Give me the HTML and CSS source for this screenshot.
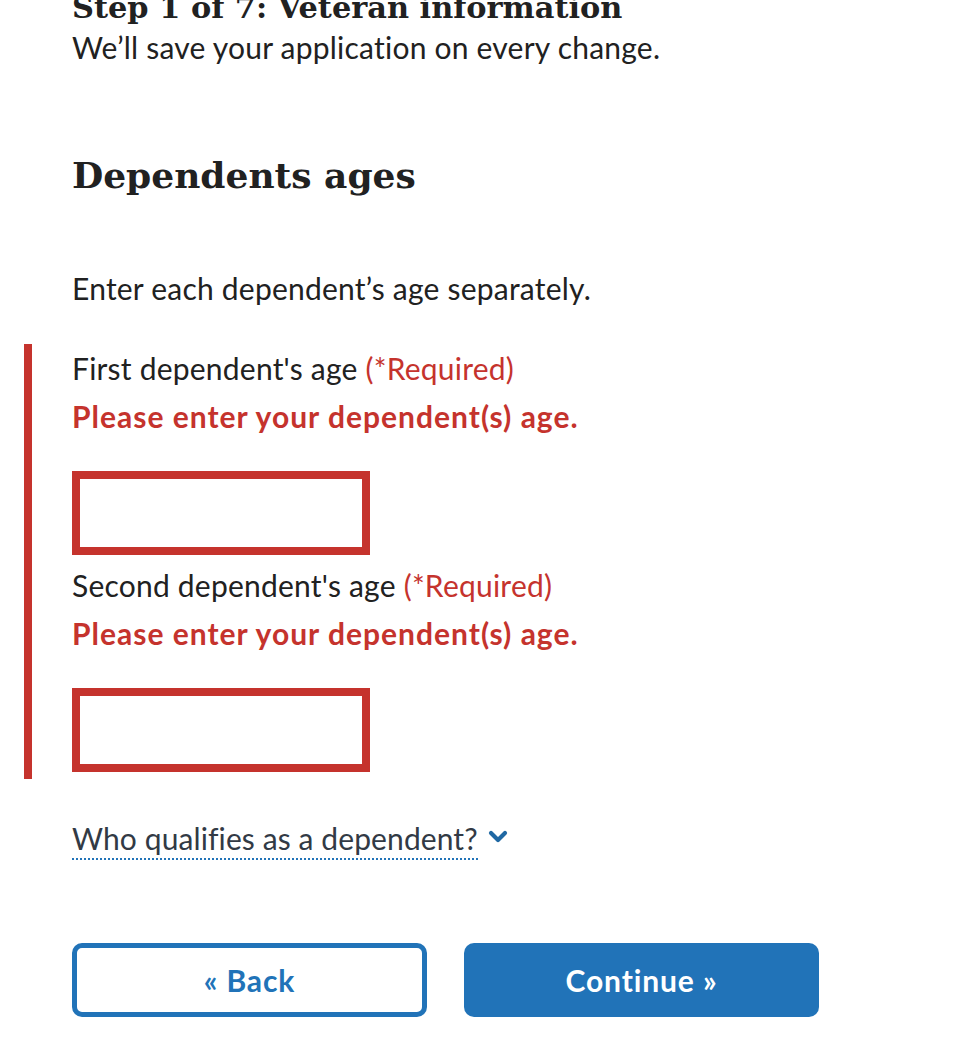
FILE: index.html
```html
<!DOCTYPE html>
<html lang="en">
<head>
<meta charset="utf-8">
<title>Dependents ages</title>
<link rel="stylesheet" href="styles.css">
</head>
<body>
<main class="page">
  <h2 class="step-title">Step 1 of 7: Veteran information</h2>
  <p class="save-note">We’ll save your application on every change.</p>

  <h3 class="section-title">Dependents ages</h3>
  <p class="intro">Enter each dependent’s age separately.</p>

  <div class="error-group">
    <div class="field">
      <label class="field-label" for="age1">First dependent's age <span class="required">(*Required)</span></label>
      <span class="error-msg">Please enter your dependent(s) age.</span>
      <input class="field-input" id="age1" type="text">
    </div>
    <div class="field">
      <label class="field-label" for="age2">Second dependent's age <span class="required">(*Required)</span></label>
      <span class="error-msg">Please enter your dependent(s) age.</span>
      <input class="field-input" id="age2" type="text">
    </div>
  </div>

  <div class="info-toggle">
    <button class="toggle-btn" type="button">Who qualifies as a dependent?</button>
    <svg class="chevron" width="20" height="14" viewBox="0 0 20 14" aria-hidden="true"><polyline points="3,3 10,10 17,3" fill="none" stroke="#1f68a3" stroke-width="4.2" stroke-linecap="round" stroke-linejoin="round"/></svg>
  </div>

  <div class="nav-buttons">
    <button class="btn btn-outline" type="button">« Back</button>
    <button class="btn btn-primary" type="button">Continue »</button>
  </div>
</main>
</body>
</html>
```

FILE: styles.css
```css
* { box-sizing: border-box; }

html, body {
  margin: 0;
  padding: 0;
  background: #ffffff;
}

body {
  font-family: "Lato", "Noto Sans", sans-serif;
  color: #212121;
  font-size: 30px;
  letter-spacing: 0.22px;
  overflow: hidden;
}

.page {
  padding-left: 72px;
  width: 956px;
}

.step-title {
  font-family: "DejaVu Serif", serif;
  font-weight: 700;
  font-size: 30.4px;
  letter-spacing: 0;
  line-height: 32px;
  margin: -9px 0 0 0;
  color: #212121;
}

.save-note {
  margin: 4px 0 0 0;
  line-height: 40px;
}

.section-title {
  font-family: "DejaVu Serif", serif;
  font-weight: 700;
  font-size: 36px;
  letter-spacing: 0;
  line-height: 48px;
  margin: 84px 0 0 0;
  color: #212121;
}

.intro {
  margin: 65px 0 0 0;
  line-height: 48px;
}

.error-group {
  margin: 32px 0 0 -48px;
  padding: 0 0 7px 40px;
  border-left: 8px solid #c5332d;
}

.field {
  display: flex;
  flex-direction: column;
}

.field + .field {
  margin-top: 6px;
}

.field-label {
  line-height: 48px;
}

.required {
  color: #c5332d;
}

.error-msg {
  line-height: 48px;
  font-weight: 700;
  letter-spacing: 1px;
  color: #c5332d;
}

.field-input {
  margin-top: 31px;
  width: 298px;
  height: 84px;
  border: 8px solid #c5332d;
  border-radius: 0;
  background: #ffffff;
  font: inherit;
  padding: 0 12px;
  outline: none;
}

.info-toggle {
  margin-top: 36px;
  display: flex;
  align-items: center;
  gap: 10px;
  height: 48px;
}

.toggle-btn {
  font-family: inherit;
  font-size: 30px;
  letter-spacing: 0.1px;
  color: #323a45;
  background: none;
  border: none;
  border-bottom: 2px dotted #2173b8;
  padding: 0 0 1px 0;
  line-height: 38px;
  cursor: pointer;
}

.chevron {
  display: block;
  margin-top: -4px;
}

.nav-buttons {
  margin-top: 80px;
  display: flex;
  gap: 37px;
}

.btn {
  width: 355px;
  height: 74px;
  border-radius: 10px;
  font-family: inherit;
  font-size: 30px;
  font-weight: 700;
  letter-spacing: 0.9px;
  cursor: pointer;
}

.btn-outline {
  background: #ffffff;
  color: #2173b8;
  border: 5px solid #2173b8;
}

.btn-primary {
  background: #2173b8;
  color: #ffffff;
  border: none;
}
```
